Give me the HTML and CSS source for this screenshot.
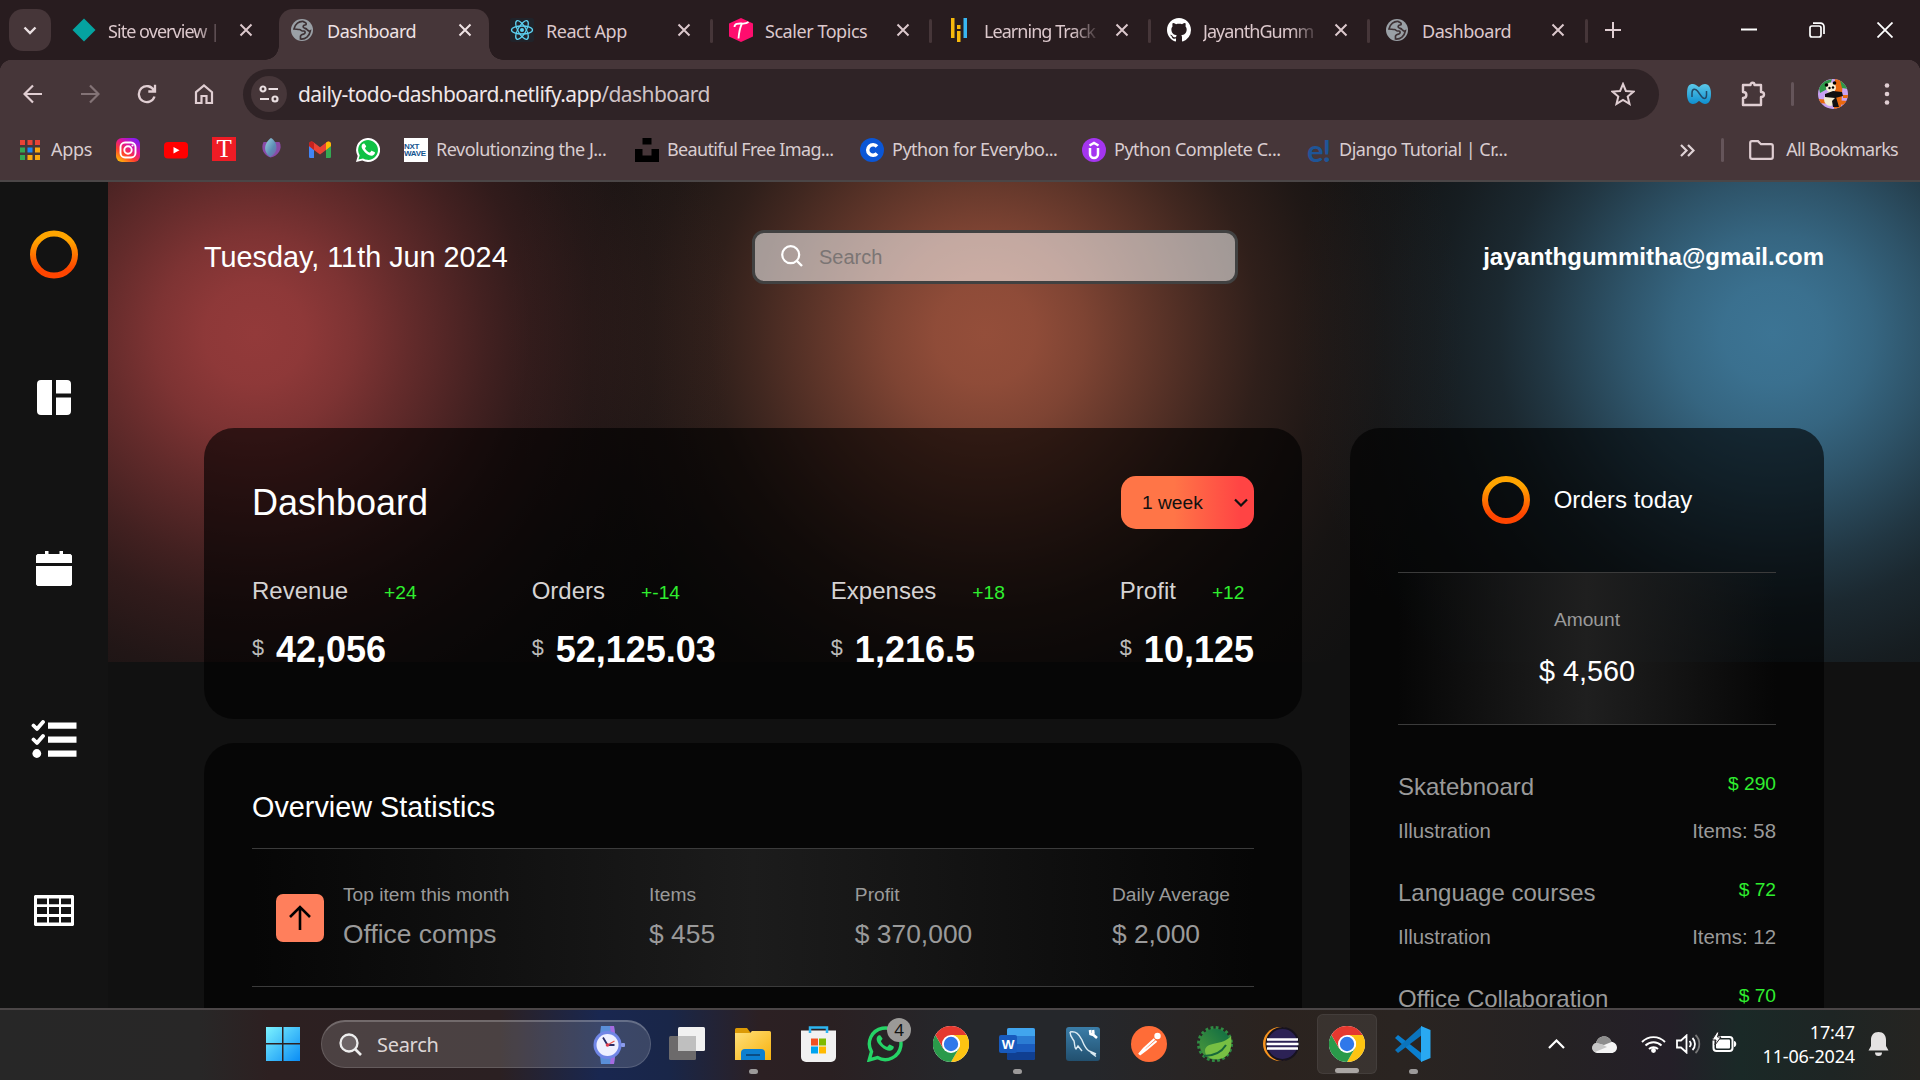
FILE: index.html
```html
<!DOCTYPE html>
<html lang="en">
<head>
<meta charset="utf-8">
<title>Dashboard</title>
<link rel="stylesheet" href="styles.css">
</head>
<body>
<svg class="defs" width="0" height="0">
  <defs>
    <linearGradient id="ring" x1="0" y1="0" x2="0" y2="1"><stop offset=".15" stop-color="#ffa500"/><stop offset=".85" stop-color="#ff4500"/></linearGradient>
    <linearGradient id="insta" x1="0" y1="1" x2=".7" y2="0"><stop offset="0" stop-color="#ffd600"/><stop offset=".4" stop-color="#ff3d2e"/><stop offset=".7" stop-color="#e0149a"/><stop offset="1" stop-color="#8a1cf0"/></linearGradient>
    <linearGradient id="win" x1="0" y1="0" x2="1" y2="1"><stop offset="0" stop-color="#7cf3ff"/><stop offset="1" stop-color="#0a8cf5"/></linearGradient>
    <linearGradient id="lotus" x1="0" y1="0" x2="1" y2="1"><stop offset="0" stop-color="#9ad4e0"/><stop offset=".6" stop-color="#5c8cb4"/><stop offset="1" stop-color="#7a60ac"/></linearGradient>
    <linearGradient id="nblue" x1="0" y1="0" x2="0" y2="1"><stop offset="0" stop-color="#5cc8e8"/><stop offset="1" stop-color="#0e8fd0"/></linearGradient>
    <linearGradient id="folder" x1="0" y1="0" x2="1" y2="1"><stop offset="0" stop-color="#ffe07a"/><stop offset="1" stop-color="#f8b20e"/></linearGradient>
    <linearGradient id="leafbg" x1="0" y1="1" x2="1" y2="0"><stop offset="0" stop-color="#4d9a3a"/><stop offset="1" stop-color="#0c6a44"/></linearGradient>
    <linearGradient id="sql" x1="0" y1="0" x2="0" y2="1"><stop offset="0" stop-color="#3a7dA8"/><stop offset="1" stop-color="#22506f"/></linearGradient>
    <symbol id="close" viewBox="0 0 14 14"><path d="M1.500 1.500l11 11M12.500 1.500l-11 11" fill="none" stroke="currentColor" stroke-width="2"/></symbol>
    <symbol id="globe" viewBox="0 0 24 24"><circle cx="11" cy="12" r="11" fill="#9aa0a6"/><path d="M12.500 3.500C8 3 4 6 3 11c2 0 3.500.5 5.500.5 1.500 0 1.500 1.500 3 1.500h1.500c1.500 0 1.500 2.500 0 3-1.500.4-3 .5-3.500 2v3c5 .5 9-3 9.800-8-1.300.8-2.300-.5-3.300-1.500-1-1.200-2.500-1-3.500-2-.8-1 0-2.500 1.500-2.500 1.500 0 1.500-1.500.5-2.300-.7-.5-1.500-.4-2-1.200z" fill="none" stroke="#3d3134" stroke-width="1.700"/></symbol>
    <symbol id="chrome" viewBox="0 0 36 36"><circle cx="18" cy="18" r="18" fill="#fff"/><path d="M18 9h15.590A18 18 0 0 1 18 36l7.800-13.500A9 9 0 0 0 18 9z" fill="#fdc412"/><path d="M10.200 22.500L2.410 9A18 18 0 0 0 18 36l7.800-13.500z" fill="#2a9a4a"/><path d="M18 9h15.590A18 18 0 0 0 2.410 9l7.800 13.500z" fill="#e5392f"/><circle cx="18" cy="18" r="9" fill="#fff"/><circle cx="18" cy="18" r="7.200" fill="#2f78ea"/></symbol>
    <symbol id="phone" viewBox="0 0 24 24"><path d="M8.300 6.200c-.3-.6-.6-.6-1-.6-.9 0-2.200 1.100-2.200 2.900 0 1.800 1.300 3.800 3.500 5.900 2.500 2.400 4.800 3.300 6.500 3.300 1.800 0 3.100-1.200 3.300-2.600.1-.6 0-.8-.4-1l-2.400-1.200c-.4-.2-.7-.1-1 .3l-.9 1.100c-.3.300-.5.400-.9.200-1.900-.9-3.300-2.200-4.200-3.900-.2-.4-.1-.6.2-.9l.7-.9c.2-.3.200-.5.100-.8z" fill="currentColor"/></symbol>
  </defs>
</svg>

<header class="tabstrip">
  <button class="tab-search"><svg width="14" height="9" viewBox="0 0 14 9"><path d="M1.500 1.500L7 7l5.500-5.500" fill="none" stroke="#eadfe1" stroke-width="2.400"/></svg></button>
  <nav class="tabs">
    <div class="tab"><svg width="24" height="24" viewBox="0 0 24 24"><path d="M12 .5L23.500 12 12 23.500.5 12z" fill="#05a3a0"/></svg><span class="fade">Site overview |</span><svg class="x"><use href="#close"/></svg></div>
    <div class="tab active"><svg width="24" height="24"><use href="#globe"/></svg><span>Dashboard</span><svg class="x"><use href="#close"/></svg></div>
    <div class="tab"><svg width="24" height="24" viewBox="0 0 24 24"><rect width="24" height="24" rx="2" fill="#20232a"/><g fill="none" stroke="#5ed3f3" stroke-width="1.300"><ellipse cx="12" cy="12" rx="10.500" ry="4"/><ellipse cx="12" cy="12" rx="10.500" ry="4" transform="rotate(60 12 12)"/><ellipse cx="12" cy="12" rx="10.500" ry="4" transform="rotate(120 12 12)"/></g><circle cx="12" cy="12" r="2" fill="#5ed3f3"/></svg><span>React App</span><svg class="x"><use href="#close"/></svg></div>
    <div class="tab sep"><svg width="24" height="24" viewBox="0 0 24 24"><path d="M12 0l12 5.500v13L12 24 0 18.500v-13z" fill="#ff0d6e"/><path d="M5.500 9c0-4 5-3.500 7-3.500s4.500.5 7-1.500M13 5.500c-2 4-3 9-3.500 15" fill="none" stroke="#fff" stroke-width="1.800"/></svg><span>Scaler Topics</span><svg class="x"><use href="#close"/></svg></div>
    <div class="tab sep"><svg width="24" height="24" viewBox="0 0 24 24"><path d="M3 0h3.500v20H3zM9 13h3.500v11H9zM9 7h3.500v4H9z" fill="#f6b90c"/><path d="M15.500 0H19v20h-3.500z" fill="#38b6f1"/></svg><span class="fade">Learning Track</span><svg class="x"><use href="#close"/></svg></div>
    <div class="tab sep"><svg width="24" height="24" viewBox="0 0 16 16"><path fill="#fff" d="M8 0C3.580 0 0 3.580 0 8c0 3.540 2.290 6.530 5.470 7.590.4.070.55-.17.55-.38 0-.19-.01-.82-.01-1.490-2.010.37-2.530-.49-2.690-.94-.09-.23-.48-.94-.82-1.130-.28-.15-.68-.52-.01-.53.63-.01 1.080.58 1.230.82.72 1.210 1.870.87 2.330.66.070-.52.28-.87.510-1.070-1.780-.2-3.640-.89-3.640-3.950 0-.87.31-1.590.82-2.150-.08-.2-.36-1.020.08-2.120 0 0 .67-.21 2.200.82.64-.18 1.320-.27 2-.27s1.360.09 2 .27c1.530-1.040 2.200-.82 2.200-.82.44 1.100.16 1.920.08 2.120.51.56.82 1.270.82 2.150 0 3.070-1.870 3.750-3.650 3.950.29.25.54.73.54 1.480 0 1.070-.01 1.930-.01 2.200 0 .21.150.46.550.38A8.010 8.010 0 0 0 16 8c0-4.420-3.580-8-8-8z"/></svg><span class="fade">JayanthGumm</span><svg class="x"><use href="#close"/></svg></div>
    <div class="tab sep last"><svg width="24" height="24"><use href="#globe"/></svg><span>Dashboard</span><svg class="x"><use href="#close"/></svg></div>
  </nav>
  <svg class="plus" width="16" height="16" viewBox="0 0 16 16"><path d="M8 0v16M0 8h16" stroke="#e0ced2" stroke-width="2"/></svg>
  <div class="winctl">
    <svg width="16" height="16" viewBox="0 0 16 16"><path d="M0 7.500h16" stroke="#fff" stroke-width="2"/></svg>
    <svg width="16" height="16" viewBox="0 0 16 16" fill="none" stroke="#fff" stroke-width="1.700"><rect x="1" y="4" width="11" height="11" rx="2"/><path d="M4 1.200h7.500a3.500 3.500 0 0 1 3.500 3.500V12"/></svg>
    <svg width="16" height="16" viewBox="0 0 16 16"><path d="M.5.5l15 15M15.500.5l-15 15" stroke="#fff" stroke-width="1.800"/></svg>
  </div>
</header>

<section class="toolbar">
  <div class="navbtns">
    <svg viewBox="0 0 20 20"><path d="M19 10H2M10 1.500L1.500 10l8.500 8.500" fill="none" stroke="#e0ced2" stroke-width="2.200"/></svg>
    <svg class="off" viewBox="0 0 20 20"><path d="M1 10h17M10 1.500l8.500 8.500-8.500 8.500" fill="none" stroke="#e0ced2" stroke-width="2.200"/></svg>
    <svg viewBox="0 0 20 20"><path d="M17.500 12.500A8 8 0 1 1 17 6.500M18 .8V7.500h-6.700" fill="none" stroke="#e0ced2" stroke-width="2.300"/></svg>
    <svg viewBox="0 0 20 20"><path d="M2 8.200L10 1.500l8 6.700V19h-5.500v-7h-5v7H2z" fill="none" stroke="#e0ced2" stroke-width="2.200"/></svg>
  </div>
  <div class="omnibox">
    <span class="site-info"><svg width="20" height="18" viewBox="0 0 20 18" fill="none" stroke="#eadfe1" stroke-width="2.200"><circle cx="4" cy="4" r="2.500"/><path d="M9.500 4H19M1 14h9"/><circle cx="16" cy="14" r="2.500"/></svg></span>
    <span class="url">daily-todo-dashboard.netlify.app<span>/dashboard</span></span>
    <svg width="24" height="24" viewBox="0 0 24 24"><path d="M12 2l2.900 7 7.600.6-5.800 4.900 1.800 7.400L12 17.900l-6.500 4 1.800-7.400L1.500 9.600 9.100 9z" fill="none" stroke="#e0ced2" stroke-width="2"/></svg>
  </div>
  <div class="extras">
    <svg class="ext-n" width="24" height="20" viewBox="0 0 24 20"><path d="M0 10C0 2 2 0 6 0c3 0 5 3 6 3s2-3 6-3c4 0 6 4 6 10s-2 10-6 10c-3 0-5-3-6-3s-2 3-6 3c-4 0-6-4-6-10z" fill="url(#nblue)"/><path d="M5 13V9c0-5 3.500-4.500 5.500-2l4 5.500C17 15.500 19.500 15 19.500 11V7" fill="none" stroke="#224a68" stroke-width="1.500"/></svg>
    <svg class="ext-p" width="26" height="26" viewBox="0 0 26 26"><path d="M3 4h7.500c0-3 4-3 4 0H21v7c4 0 4 5 0 5v8H3v-7c4.500 0 4.500-6 0-6z" fill="none" stroke="#e0ced2" stroke-width="2.400" stroke-linejoin="round"/></svg>
    <i class="bar"></i>
    <svg class="avatar" width="30" height="30" viewBox="0 0 30 30"><clipPath id="av"><circle cx="15" cy="15" r="15"/></clipPath><g clip-path="url(#av)"><rect width="30" height="30" fill="#c9a2f2"/><path d="M0 4L14 0l-3 9-9 5z" fill="#2d9a48"/><path d="M17 0h8l-2 30h-7z" fill="#e8680f"/><path d="M0 20l30 2v4L0 24zM25 16h5v3h-5z" fill="#e8680f"/><path d="M22 1l8 3v6l-6-1z" fill="#2d9a48"/><ellipse cx="12" cy="20" rx="6" ry="7" fill="#f3ecd0"/><circle cx="13" cy="8.500" r="5" fill="#f6efd6"/><path d="M7 15l8-3 9 1 1 4-8 2-10-1zM14 22l4-4 3 10h-6z" fill="#111"/><circle cx="8.500" cy="6" r="1.800"/><circle cx="16.500" cy="4" r="1.800"/><circle cx="11.500" cy="9" r="1.200"/><circle cx="15" cy="8.500" r="1.200"/></g></svg>
    <svg class="dots" width="6" height="26" viewBox="0 0 6 26" fill="#e0ced2"><circle cx="3" cy="4.500" r="2.300"/><circle cx="3" cy="13" r="2.300"/><circle cx="3" cy="21.500" r="2.300"/></svg>
  </div>
</section>

<section class="bookmarks">
  <div class="bm apps"><svg width="20" height="20" viewBox="0 0 20 20"><path d="M0 0h5v5H0zM7.500 0h5v5h-5zM15 0h5v5h-5z" fill="#ea4335"/><path d="M0 7.500h5v5H0zM0 15h5v5H0z" fill="#34a853"/><path d="M7.500 7.500h5v5h-5z" fill="#1a86f5"/><path d="M15 7.500h5v5h-5zM7.500 15h5v5h-5zM15 15h5v5h-5z" fill="#fba80f"/></svg><span>Apps</span></div>
  <div class="bm"><svg viewBox="0 0 24 24"><rect width="24" height="24" rx="6" fill="url(#insta)"/><g fill="none" stroke="#fff" stroke-width="1.900"><rect x="4.500" y="4.500" width="15" height="15" rx="4.500"/><circle cx="12" cy="12" r="3.700"/></g><circle cx="16.500" cy="7.500" r="1.100" fill="#fff"/></svg></div>
  <div class="bm"><svg viewBox="0 0 24 24"><rect y="4" width="24" height="16.500" rx="4" fill="#f00"/><path d="M9.500 9v6.500l6-3.250z" fill="#fff"/></svg></div>
  <div class="bm"><span class="tee">T</span></div>
  <div class="bm"><svg viewBox="0 0 24 24"><path d="M3.500 4c-3 7 0 13 7 15.500C18 18 23 11 19.500 4z" fill="#8a4ba8"/><path d="M11 0c-6 4-9 13-1 19 9-4 8-15 1-19z" fill="url(#lotus)"/></svg></div>
  <div class="bm"><svg viewBox="0 0 24 24"><path d="M1 6v12.500c0 1 .6 1.500 1.500 1.500H6V8z" fill="#4285f4"/><path d="M23 6v12.500c0 1-.6 1.500-1.500 1.500H18V8z" fill="#34a853"/><path d="M1 8V6.200C1 3.500 3.800 3 5.500 4.300L12 9.300l6.500-5C20.200 3 23 3.500 23 6.200V8l-5 4-6 4.500L6 12z" fill="#ea4335"/><path d="M18 12V5l.5-.7C20.200 3 23 3.500 23 6.200V8z" fill="#fbbc04"/><path d="M6 12V5l-.5-.7C3.800 3 1 3.500 1 6.200V8z" fill="#c5221f"/></svg></div>
  <div class="bm wa"><svg viewBox="0 0 24 24"><path d="M0 24l1.700-6A12 12 0 1 1 6.300 22.500z" fill="#fff"/><path d="M2.500 21.500l1.200-4.200a9.900 9.900 0 1 1 3.300 3.200z" fill="#0fc144"/><use href="#phone" width="24" height="24" x=".5"/></svg></div>
  <div class="bm"><span class="nxt"><b>NXT</b><b>WAVE</b></span><span>Revolutionzing the J...</span></div>
  <div class="bm tight"><svg viewBox="0 0 24 24"><path d="M7.500 0h9v6.500h-9zM0 11h7.500v6.500h9V11H24v13H0z" fill="#000"/></svg><span>Beautiful Free Imag...</span></div>
  <div class="bm"><svg viewBox="0 0 24 24"><circle cx="12" cy="12" r="12" fill="#0a56d6"/><path d="M17 8.500a5.300 5.300 0 1 0 0 7" fill="none" stroke="#fff" stroke-width="3.500"/></svg><span>Python for Everybo...</span></div>
  <div class="bm"><svg viewBox="0 0 24 24"><circle cx="12" cy="12" r="12" fill="#a435f0"/><path d="M8 10v6a4 4 0 0 0 8 0v-6M7.500 7.500L12 5l4.500 2.500" fill="none" stroke="#fff" stroke-width="2.500"/></svg><span>Python Complete C...</span></div>
  <div class="bm"><span class="edu">e!</span><span>Django Tutorial | Cr...</span></div>
  <div class="bm-right"><svg width="15" height="13" viewBox="0 0 15 13"><path d="M1 1l5.500 5.500L1 12M8 1l5.500 5.500L8 12" fill="none" stroke="#e0d3d6" stroke-width="2.200"/></svg><i class="bar"></i><svg width="25" height="20" viewBox="0 0 25 20"><path d="M1.200 3c0-1 .8-1.800 1.800-1.800h6l3 3h10c1 0 1.800.8 1.800 1.800v11c0 1-.8 1.800-1.800 1.800H3c-1 0-1.800-.8-1.800-1.800z" fill="none" stroke="#e0ced2" stroke-width="2.200"/></svg><span>All Bookmarks</span></div>
</section>

<div class="viewport">
  <aside class="sidebar">
    <svg class="i-ring" width="48" height="49" viewBox="0 0 48 48"><circle cx="24" cy="24" r="21" fill="none" stroke="url(#ring)" stroke-width="6"/></svg>
    <svg class="i-dash" width="34" height="35" viewBox="0 0 34 35"><path d="M4 0h11v35H4a4 4 0 0 1-4-4V4a4 4 0 0 1 4-4zM19 0h11a4 4 0 0 1 4 4v9.500H19zM19 17.500h15V31a4 4 0 0 1-4 4H19z" fill="#fff"/></svg>
    <svg class="i-cal" width="36" height="35" viewBox="0 0 36 35"><path d="M9 0h3.500v3h11V0H27v3h7.500L36 4.500V12H0V4.500L1.500 3H9zM0 15h36v18.500L34.500 35h-33L0 33.500z" fill="#fff"/></svg>
    <svg class="i-task" width="46" height="38" viewBox="0 0 46 38"><path d="M2.500 5.500l3.500 3.500 6-7M2.500 19.500L6 23l6-7" fill="none" stroke="#fff" stroke-width="3.800" stroke-linecap="round" stroke-linejoin="round"/><circle cx="5.800" cy="33.500" r="4.400" fill="#fff"/><path d="M17 2.500h28.500v6.200H17zM17 16.500h28.500v6.200H17zM17 30.500h28.500v6.200H17z" fill="#fff"/></svg>
    <svg class="i-table" width="40" height="31" viewBox="0 0 40 31"><path fill-rule="evenodd" d="M1 0h38l1 1v29l-1 1H1l-1-1V1zM3 3.500v5.700h10V3.500zm12 0v5.700h10V3.500zm12 0v5.700h10V3.500zM3 12v7h10v-7zm12 0v7h10v-7zm12 0v7h10v-7zM3 22v5.500h10V22zm12 0v5.500h10V22zm12 0v5.500h10V22z" fill="#fff"/></svg>
  </aside>
  <main class="main">
    <div class="topbar">
      <p class="date">Tuesday, 11th Jun 2024</p>
      <label class="search"><svg width="22" height="22" viewBox="0 0 22 22"><circle cx="9.700" cy="9.700" r="8.500" fill="none" stroke="#fff" stroke-width="2.200"/><path d="M16 16l5 5" stroke="#fff" stroke-width="2.400"/></svg><span>Search</span></label>
      <p class="email">jayanthgummitha@gmail.com</p>
    </div>
    <div class="content">
      <div class="left">
        <section class="card summary">
          <div class="card-head"><h1>Dashboard</h1><div class="select"><span>1 week</span><svg width="14" height="9" viewBox="0 0 14 9"><path d="M1 1.500l6 6 6-6" fill="none" stroke="#111" stroke-width="2.200"/></svg></div></div>
          <div class="kpis">
            <div class="kpi"><p>Revenue<em>+24</em></p><div><small>$</small><b>42,056</b></div></div>
            <div class="kpi"><p>Orders<em>+-14</em></p><div><small>$</small><b>52,125.03</b></div></div>
            <div class="kpi"><p>Expenses<em>+18</em></p><div><small>$</small><b>1,216.5</b></div></div>
            <div class="kpi"><p>Profit<em>+12</em></p><div><small>$</small><b>10,125</b></div></div>
          </div>
        </section>
        <section class="card overview">
          <h2>Overview Statistics</h2>
          <div class="stats">
            <div class="stat top"><span class="up"><svg width="24" height="26" viewBox="0 0 24 26"><path d="M12 25V2M2 12L12 2l10 10" fill="none" stroke="#000" stroke-width="2.600"/></svg></span><div><p>Top item this month</p><strong>Office comps</strong></div></div>
            <div class="stat"><p>Items</p><strong>$ 455</strong></div>
            <div class="stat"><p>Profit</p><strong>$ 370,000</strong></div>
            <div class="stat"><p>Daily Average</p><strong>$ 2,000</strong></div>
          </div>
        </section>
      </div>
      <section class="card orders">
        <div class="orders-head"><svg width="48" height="48" viewBox="0 0 48 48"><circle cx="24" cy="24" r="21" fill="none" stroke="url(#ring)" stroke-width="6"/></svg><span>Orders today</span></div>
        <div class="amount"><p>Amount</p><strong>$ 4,560</strong></div>
        <div class="order"><div><span>Skatebnoard</span><em>$ 290</em></div><div class="sub"><span>Illustration</span><span>Items: 58</span></div></div>
        <div class="order"><div><span>Language courses</span><em>$ 72</em></div><div class="sub"><span>Illustration</span><span>Items: 12</span></div></div>
        <div class="order"><div><span>Office Collaboration</span><em>$ 70</em></div></div>
      </section>
    </div>
  </main>
</div>

<footer class="taskbar">
  <svg class="start" width="36" height="36" viewBox="0 0 36 36"><path d="M1 1h16v16H1zM18.500 1H35v16H18.500zM1 18.500h16V35H1zM18.500 18.500H35V35H18.500z" fill="url(#win)"/></svg>
  <div class="tb-search"><svg width="23" height="23" viewBox="0 0 23 23"><circle cx="10" cy="10" r="8.500" fill="#6d6466" stroke="#eee" stroke-width="2.300"/><path d="M16 16l6 6" stroke="#eee" stroke-width="2.600"/></svg><span>Search</span>
    <svg class="watch" width="32" height="38" viewBox="0 0 32 38"><path d="M8 0h13l1 8H7zM7 30h15l-1 8H8z" fill="#5a8fd8"/><path d="M17 0h4l1 8h-4zM18 30h4l-1 8h-4z" fill="#a56be0"/><circle cx="14.500" cy="19" r="14" fill="#7086e6"/><circle cx="14.500" cy="19" r="11" fill="#eef0ff"/><rect x="28" y="17" width="4" height="4" rx="1" fill="#8b9cec"/><path d="M10 11.500l4.500 7.500h7" fill="none" stroke="#2a2e66" stroke-width="1.800"/><path d="M14.500 19l7-4" stroke="#ee5c50" stroke-width="1.300"/><circle cx="14.500" cy="19" r="1.800" fill="#e03c50"/></svg></div>
  <div class="apps-row">
    <span class="app"><svg viewBox="0 0 36 36"><rect x="9" y="1" width="27" height="24" rx="1.500" fill="#f1f1f1"/><rect x="0" y="10" width="27" height="24" rx="1.500" fill="#6c6a6b"/><path d="M9 10h18v15H9z" fill="#bfbfbf"/></svg></span>
    <span class="app run"><svg viewBox="0 0 36 36"><path d="M0 3.500A1.500 1.500 0 0 1 1.500 2H12l3 4v5H0z" fill="#dc9a05"/><path d="M0 7h15l2-2h17.500A1.500 1.500 0 0 1 36 6.500V34H0z" fill="url(#folder)"/><path d="M6 34v-7a4 4 0 0 1 4-4h16a4 4 0 0 1 4 4v7z" fill="#0c7fd0"/><path d="M11 29h14" stroke="#0a4d85" stroke-width="2"/></svg></span>
    <span class="app"><svg viewBox="0 0 36 36"><path d="M0 4.500h35V31a5 5 0 0 1-5 5H5a5 5 0 0 1-5-5z" fill="#f1f1f1"/><path d="M9 7V1.500h17V7" fill="none" stroke="#2cb5f0" stroke-width="2.500"/><path d="M10 12.500h7v7h-7z" fill="#f25022"/><path d="M18 12.500h7v7h-7z" fill="#7fba00"/><path d="M10 20.500h7v7h-7z" fill="#00a4ef"/><path d="M18 20.500h7v7h-7z" fill="#ffb900"/></svg></span>
    <span class="app tbwa"><svg viewBox="0 0 36 36"><path d="M2.200 34l2.300-8.300a15.800 15.800 0 1 1 6 5.900z" fill="none" stroke="#25d366" stroke-width="3.400"/><use href="#phone" x="3" y="2" width="31" height="31"/></svg><i class="badge">4</i></span>
    <span class="app"><svg><use href="#chrome"/></svg></span>
    <span class="app run"><svg viewBox="0 0 36 36"><rect x="8" y="2" width="28" height="32" rx="2" fill="#1b5cbe"/><path d="M8 10V4a2 2 0 0 1 2-2h24a2 2 0 0 1 2 2v6z" fill="#41a5ee"/><path d="M8 10h28v8H8z" fill="#2b7cd3"/><path d="M8 26h28v6a2 2 0 0 1-2 2H10a2 2 0 0 1-2-2z" fill="#103f91"/><rect y="9" width="18" height="18" rx="2" fill="#185abd"/><text x="9" y="22.500" text-anchor="middle" font-size="13.500" font-weight="bold" font-family="Liberation Sans, sans-serif" fill="#fff">W</text></svg></span>
    <span class="app"><svg viewBox="0 0 36 36"><rect x="1" y="1" width="34" height="34" rx="3" fill="url(#sql)"/><path d="M5 6c6-1 9 2 12 8 2 5 3 8 7 11l7 3-4-.5 4 3M5 6c0 4 2 6 4 9 1 3 0 6 2 8l2-3 4 5" fill="none" stroke="#dcebf3" stroke-width="1.400"/><path d="M25 4l.5 4 3 1 3.500 3M28 4l.5 4" stroke="#fff" stroke-width="2.600" fill="none"/></svg></span>
    <span class="app"><svg viewBox="0 0 36 36"><circle cx="18" cy="18" r="18" fill="#ff6c37"/><circle cx="26.500" cy="10" r="3.200" fill="#fff"/><path d="M23.500 13L13 22.500l-5 6M25.500 15L15.500 23.500l-7 5" fill="none" stroke="#fff" stroke-width="2.200"/></svg></span>
    <span class="app"><svg viewBox="0 0 36 36"><circle cx="18" cy="18" r="15.500" fill="url(#leafbg)"/><circle cx="18" cy="18" r="16.500" fill="none" stroke="#2f8a42" stroke-width="3" stroke-dasharray="2.800 2.400"/><path d="M34 10c2 12-2 22-12 23-7 1-14-2-14-8 0-10 18-5 26-15z" fill="#77bf43"/><path d="M7 30c9 0 17-3 22-11" fill="none" stroke="#17683a" stroke-width="2"/></svg></span>
    <span class="app"><svg viewBox="0 0 36 36"><circle cx="17" cy="18" r="17" fill="#f7941e"/><circle cx="19.500" cy="18" r="17" fill="#17131f"/><circle cx="19.500" cy="18" r="15" fill="#2c2255"/><path d="M4 13.500h31M3.500 18h32M4 22.500h31" stroke="#fff" stroke-width="2.400"/></svg></span>
    <span class="app on"><svg><use href="#chrome"/></svg></span>
    <span class="app run"><svg viewBox="0 0 36 36"><path d="M0 12l3-3 24 18.500V36z" fill="#0a7fcf"/><path d="M0 24l3 3L27 9V0z" fill="#0b74bd"/><path d="M26 0l9.500 4v28L26 36z" fill="#29a9f2"/></svg></span>
  </div>
  <div class="tray">
    <svg width="17" height="10" viewBox="0 0 17 10"><path d="M1 9l7.500-7.500L16 9" fill="none" stroke="#fff" stroke-width="2.200"/></svg>
    <svg class="t-cloud" width="25" height="17" viewBox="0 0 25 17"><path d="M5 17a5 5 0 0 1-1-9.700C5 3 8 .5 12 .5c3.500 0 6.500 2 7.500 5.500 3 0 5.500 2.500 5.500 5.500s-2.500 5.500-5.500 5.500z" fill="#f4f4f4"/><path d="M4 7.300C5 3 8 .5 12 .5c3.500 0 6.500 2 7.500 5.500L12 9z" fill="#8d8d8d"/><path d="M0 12c0-3 2-5 4.500-5S9 8 15 11L3 16c-2-1-3-2.500-3-4z" fill="#c6c6c6"/></svg>
    <svg class="t-wifi" width="25" height="18" viewBox="0 0 25 18" fill="none" stroke="#fff" stroke-width="1.900"><path d="M1 7a16 16 0 0 1 23 0M4.500 10.500a11.500 11.500 0 0 1 16 0M8 14a6.500 6.500 0 0 1 9 0"/><circle cx="12.500" cy="15.500" r="1.500" fill="#fff"/></svg>
    <svg class="t-vol" width="25" height="20" viewBox="0 0 25 20" fill="none" stroke="#fff" stroke-width="1.800"><path d="M1 6.500h4L10.500 1.500v17L5 13.500H1zM13.500 7a4.500 4.500 0 0 1 0 6M16.500 4a8.500 8.500 0 0 1 0 12"/><path d="M19.500 1a12.500 12.500 0 0 1 0 18" stroke="#777"/></svg>
    <svg class="t-bat" width="25" height="20" viewBox="0 0 25 20"><rect x="1.500" y="5" width="19" height="14" rx="3" fill="none" stroke="#fff" stroke-width="2"/><rect x="4" y="7.500" width="14" height="9" rx="1" fill="#fff"/><path d="M22 9c3 0 3 6 0 6z" fill="#fff"/><path d="M5 0L0 8h4l-1 5 6-8H5.500L7 0z" fill="#fff" stroke="#242124"/></svg>
    <div class="clock"><span>17:47</span><span>11-06-2024</span></div>
    <svg class="t-bell" width="21" height="24" viewBox="0 0 21 24"><path d="M10.500 0C5.500 0 3 3.500 3 8v6L.5 18.500h20L18 14V8c0-4.500-2.500-8-7.500-8zM7 20.500h7a3.500 3.500 0 0 1-7 0z" fill="#e4e2e2"/></svg>
  </div>
</footer>
</body>
</html>
```
FILE: styles.css
```css
* { box-sizing: border-box; margin: 0; padding: 0; }
body {
  width: 1920px; height: 1080px; overflow: hidden;
  display: flex; flex-direction: column;
  background: #111;
  font-family: "Liberation Sans", Arial, sans-serif;
  color: #fff;
}
svg { display: block; flex: none; }
em, i { font-style: normal; }
.defs { position: absolute; }

/* browser chrome */
.tabstrip, .toolbar, .bookmarks, .taskbar { font-family: "Noto Sans", "Open Sans", sans-serif; }
.tabstrip { flex: none; height: 60px; display: flex; align-items: center; background: #281c1f; padding-left: 9px; }
.tab-search { width: 42px; height: 42px; border: 0; border-radius: 14px; background: #463639; display: flex; align-items: center; justify-content: center; }
.tabs { display: flex; margin-left: 9px; height: 51px; align-self: flex-end; }
.tab { width: 219px; padding: 0 26px 9px 12px; display: flex; align-items: center; position: relative; font-size: 18px; color: #dcc8cc; }
.tab span { margin-left: 12px; width: 116px; white-space: nowrap; letter-spacing: -.45px; padding-top: 2px; }
.tab span.fade { letter-spacing: -.95px; -webkit-mask-image: linear-gradient(90deg, #000 76%, rgba(0,0,0,.12) 98%); }
.tab .x { width: 14px; height: 14px; margin-left: auto; }
.tab.active { width: 210px; margin-right: 9px; padding-right: 17px; background: #463639; border-radius: 14px 14px 0 0; color: #efe3e5; }
.tab.active::before, .tab.active::after { content: ""; position: absolute; bottom: 0; width: 14px; height: 14px; }
.tab.active::before { left: -14px; background: radial-gradient(circle at 0 0, transparent 13.500px, #463639 14px); }
.tab.active::after { right: -14px; background: radial-gradient(circle at 100% 0, transparent 13.500px, #463639 14px); }
.tab.sep::before, .tab.last::after { content: ""; position: absolute; left: -7px; top: 10px; width: 3px; height: 24px; background: #463639; border-radius: 2px; }
.tab.last { width: 217px; }
.tab.last::after { left: 211px; }
.plus { margin-left: 14px; }
.winctl { display: flex; gap: 52px; margin-left: auto; margin-right: 27px; }

.toolbar { flex: none; height: 60px; display: flex; align-items: center; padding: 8px 0 0; background: radial-gradient(circle at 12px 12px, #463639 12px, #281c1f 12.500px) 0 0 / 12px 12px no-repeat, radial-gradient(circle at 0 12px, #463639 12px, #281c1f 12.500px) 100% 0 / 12px 12px no-repeat, #463639; }
.navbtns { display: flex; gap: 37px; padding-left: 23px; width: 243px; }
.navbtns svg { width: 20px; height: 20px; }
.navbtns .off { opacity: .4; }
.omnibox { width: 1416px; height: 51px; border-radius: 26px; background: #2f2326; display: flex; align-items: center; padding: 0 24px 0 8px; }
.site-info { width: 36px; height: 36px; border-radius: 50%; background: #463639; display: flex; align-items: center; justify-content: center; }
.url { flex: 1; margin-left: 11px; font-size: 21px; letter-spacing: -.56px; color: #f0e7e9; }
.url span { color: #cfc3c6; }
.extras { display: flex; align-items: center; }
.ext-n { margin-left: 28px; }
.ext-p { margin-left: 29px; }
.bar { width: 3px; height: 24px; border-radius: 2px; background: #65555a; }
.extras .bar { margin-left: 25px; }
.avatar { margin-left: 24px; }
.dots { margin-left: 36px; }

.bookmarks { flex: none; height: 62px; border-bottom: 2px solid #4b4647; background: #463639; display: grid; grid-template-columns: 96px repeat(6, 48px) 231px 225px 222px 225px 225px 1fr; padding: 0 22px 0 20px; align-items: center; font-size: 18px; color: #d9cdd0; letter-spacing: -.5px; }
.bm { display: flex; align-items: center; gap: 8px; white-space: nowrap; }
.bm > span:last-child { position: relative; top: -1px; }
.bm.tight { letter-spacing: -.66px; }
.bm svg { width: 24px; height: 24px; }
.bm.apps svg { width: 20px; height: 20px; }
.bm.apps { gap: 11px; letter-spacing: -.3px; }
.wa { color: #fff; }
.tee { width: 24px; height: 24px; background: #ee1c25; font: 25px/24px "Liberation Serif", serif; text-align: center; color: #fff; }
.nxt { width: 24px; height: 24px; background: #fff; color: #14548f; display: flex; flex-direction: column; justify-content: center; font: bold 8px/7px "Liberation Sans", sans-serif; letter-spacing: -.3px; }
.edu { width: 24px; font: bold 31px/24px Lato, sans-serif; color: #1f5597; letter-spacing: -1px; }
.bm-right { display: flex; align-items: center; justify-content: flex-end; white-space: nowrap; }
.bm-right .bar { margin: 0 25px 0 26px; }
.bm-right span { margin-left: 12px; margin-top: -2px; letter-spacing: -.72px; }

/* dashboard page */
.viewport { flex: 1; min-height: 0; display: flex; overflow: hidden; }
.sidebar { width: 108px; background: #131313; display: flex; flex-direction: column; align-items: center; padding-top: 48px; }
.i-dash { margin-top: 101px; }
.i-cal { margin-top: 136px; }
.i-task { margin-top: 134px; }
.i-table { margin-top: 137px; }
.main {
  flex: 1; padding: 48px 96px 0;
  background:
    radial-gradient(circle at 147px 152px, rgba(147,58,58,1) 0, rgba(147,58,58,.96) 50px, rgba(147,58,58,.83) 100px, rgba(147,58,58,.64) 153px, rgba(147,58,58,.38) 230px, rgba(147,58,58,.25) 275px, rgba(147,58,58,.13) 340px, rgba(147,58,58,.05) 400px, rgba(147,58,58,0) 480px),
    radial-gradient(circle at 877px 152px, rgba(148,78,58,1) 0, rgba(148,78,58,.96) 50px, rgba(148,78,58,.83) 100px, rgba(148,78,58,.64) 153px, rgba(148,78,58,.37) 230px, rgba(148,78,58,.23) 275px, rgba(148,78,58,.11) 340px, rgba(148,78,58,.04) 400px, rgba(148,78,58,0) 480px),
    radial-gradient(circle at 1665px 152px, rgba(60,116,148,1) 0, rgba(60,116,148,.96) 50px, rgba(60,116,148,.85) 100px, rgba(60,116,148,.67) 153px, rgba(60,116,148,.38) 230px, rgba(60,116,148,.24) 275px, rgba(60,116,148,.12) 340px, rgba(60,116,148,.05) 400px, rgba(60,116,148,0) 480px),
    #111;
  background-size: 100% 480px; background-repeat: no-repeat;
}
.topbar { height: 54px; display: grid; grid-template-columns: 548px 486px 1fr; align-items: center; }
.date { font-size: 28.800px; }
.search { height: 54px; border: 3px solid #414141; border-radius: 12px; background: rgba(255,255,255,.54); display: flex; align-items: center; gap: 16px; padding-left: 26px; font-size: 20px; color: #7b7574; }
.search svg { margin-top: -2px; }
.email { font-size: 24px; font-weight: bold; text-align: right; }
.content { display: flex; gap: 48px; margin-top: 144px; align-items: flex-start; }
.left { width: 1098px; display: flex; flex-direction: column; gap: 24px; }
.card { background: rgba(0,0,0,.62); border-radius: 30px; padding: 48px; }
.summary { height: 291px; }
.card-head { display: flex; justify-content: space-between; align-items: center; height: 53px; }
h1 { font-size: 36px; font-weight: normal; }
.select { width: 133px; height: 53px; border-radius: 15px; background: linear-gradient(90deg, #ff7547 40%, #ff4444 90%); color: #111; font-size: 19.200px; display: flex; align-items: center; justify-content: space-between; padding: 0 6px 0 21px; }
.kpis { display: flex; justify-content: space-between; margin-top: 48px; }
.kpi p { font-size: 24px; line-height: 28px; color: #d6d3d3; }
.kpi em { font-size: 19.200px; color: #2fee2f; margin-left: 36px; }
.kpi div { display: flex; margin-top: 22px; line-height: 42px; }
.kpi small { font-size: 21.600px; line-height: 38px; width: 24px; color: #bcbcbc; }
.kpi b { font-size: 36px; }
.overview { height: 400px; }
h2 { font-size: 28.800px; font-weight: normal; line-height: 33px; }
.stats { margin-top: 24px; height: 139px; border: solid #3b3b3b; border-width: 1px 0; background: linear-gradient(90deg, transparent, #1c1c1c 50%, transparent); display: flex; justify-content: space-between; align-items: center; padding: 0 24px; color: #9a9a9a; }
.stat.top { display: flex; align-items: center; gap: 19px; }
.up { width: 48px; height: 48px; border-radius: 7px; background: #ff7f5c; display: flex; align-items: center; justify-content: center; }
.stat p { font-size: 19.200px; line-height: 22px; margin-top: -3px; }
.stat strong { display: block; font-weight: normal; font-size: 26.400px; line-height: 30px; margin-top: 13px; }
.orders { width: 474px; height: 700px; }
.orders-head { height: 48px; display: flex; justify-content: center; align-items: center; gap: 24px; font-size: 24px; }
.amount { margin-top: 48px; height: 153px; border: solid #3b3b3b; border-width: 1px 0; background: linear-gradient(90deg, transparent, #1f1f1f 50%, transparent); text-align: center; padding-top: 36px; }
.amount p { font-size: 19.200px; line-height: 22px; color: #9a9a9a; }
.amount strong { display: block; font-weight: normal; font-size: 28.800px; line-height: 34px; margin-top: 23px; }
.order { height: 106px; color: #9a9a9a; }
.amount + .order { margin-top: 48px; }
.order div { display: flex; justify-content: space-between; font-size: 24px; line-height: 28px; }
.order em { font-size: 19.200px; line-height: 21px; color: #2fee2f; }
.order .sub { font-size: 20.400px; line-height: 24px; margin-top: 18px; }

/* system taskbar */
.taskbar {
  flex: none; height: 72px; border-top: 2px solid #4b4647; display: flex; align-items: center; padding: 0 0 2px 265px;
  background: linear-gradient(90deg, #272727 0, #282727 200px, #2d2021 270px, #2b2022 500px, #192750 600px, #192648 670px, #2c2023 760px, #2a2022 830px, #25272b 960px, #25272b 1090px, #2b231f 1270px, #2a2421 1400px, #252223 1550px, #241f28 1670px, #1a2927 1740px, #1e2524 1830px, #252421 1920px);
}
.tb-search { margin-left: 20px; width: 330px; height: 48px; border-radius: 24px; border: 1px solid rgba(255,255,255,.14); border-top: 2px solid rgba(255,255,255,.22); background: rgba(255,255,255,.15); display: flex; align-items: center; padding: 0 25px 0 17px; font-size: 20px; color: #ddd6d6; letter-spacing: -.3px; }
.tb-search span { flex: 1; margin-left: 15px; }
.apps-row { display: flex; gap: 6px; margin-left: 6px; }
.app { width: 60px; height: 60px; border-radius: 6px; position: relative; display: flex; align-items: center; justify-content: center; }
.app svg { width: 36px; height: 36px; }
.app.on { background: rgba(255,255,255,.07); border: 1px solid rgba(255,255,255,.06); }
.app.run::after, .app.on::after { content: ""; position: absolute; bottom: 0; width: 9px; height: 5px; border-radius: 3px; background: #9c9a9a; }
.app.on::after { width: 24px; background: #aaa6a4; }
.tbwa { color: #25d366; }
.badge { position: absolute; left: 32px; top: 4px; width: 24px; height: 24px; border-radius: 50%; background: #9b9a98; color: #111; font-size: 17px; line-height: 24px; text-align: center; }
.tray { margin-left: auto; display: flex; align-items: center; padding-right: 31px; }
.t-cloud { margin-left: 27px; }
.t-wifi { margin-left: 24px; }
.t-vol { margin-left: 10px; }
.t-bat { margin-left: 11px; margin-top: -5px; }
.clock { width: 118px; display: flex; flex-direction: column; text-align: right; font-size: 18px; line-height: 24px; letter-spacing: -.15px; }
.t-bell { margin-left: 13px; }
```
